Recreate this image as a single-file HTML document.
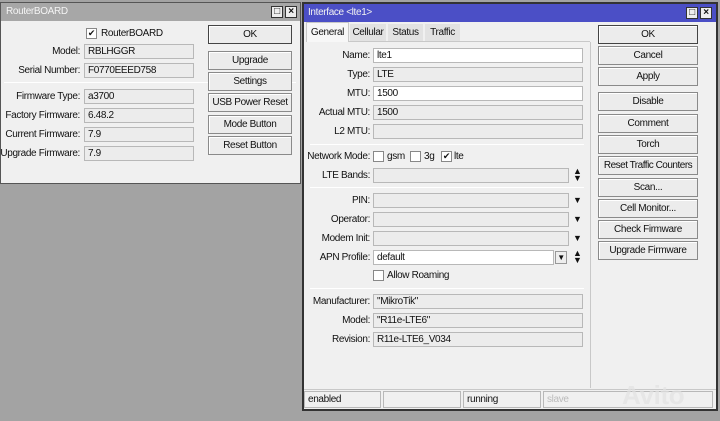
<!DOCTYPE html>
<html><head><style>
*{margin:0;padding:0;box-sizing:border-box}
body{width:720px;height:421px;background:#a3a3a3;font-family:"Liberation Sans",sans-serif;font-size:10px;color:#111;position:relative;overflow:hidden;letter-spacing:-0.35px}
div{white-space:nowrap}
.a{position:absolute}
.win{background:#f0f0f0;border:1px solid #555}
.f{position:absolute;height:15px;border:1px solid #b8b8b8;background:#ececec;padding-left:3px;line-height:13px;font-size:10px}
.w{background:#fff}
.l{position:absolute;text-align:right;line-height:15px}
.b{position:absolute;height:19px;border:1px solid #8a8a8a;background:#ececec;text-align:center;line-height:17px;box-shadow:inset 1px 1px 0 #fff;overflow:hidden}
.sep{position:absolute;height:1px;background:#c8c8c8;border-bottom:1px solid #fff}
.cb{position:absolute;width:11px;height:11px;border:1px solid #888;background:#fff;font-size:9px;line-height:9px;text-align:center}
.ar{position:absolute;font-size:9px}
.tb{position:absolute;top:4px;width:12px;height:12px;border:1px solid #333;background:#eee;font-size:10px;line-height:10px;text-align:center;font-weight:bold}
</style></head><body>
<!-- left window -->
<div class="a win" style="left:0;top:2px;width:301px;height:182px">
<div class="a" style="left:0;top:0;width:299px;height:18px;background:#a7a7a7;color:#f4f4f4;padding-left:5px;line-height:18px">RouterBOARD</div>
<div class="tb" style="left:270px;top:3px">□</div><div class="tb" style="left:284px;top:3px">×</div>
</div>
<div class="cb" style="left:86px;top:28px">✔</div><div class="a" style="left:101px;top:26px;line-height:15px">RouterBOARD</div>
<div class="l" style="left:0;width:80px;top:44px">Model:</div><div class="f" style="left:84px;top:44px;width:110px">RBLHGGR</div>
<div class="l" style="left:0;width:80px;top:63px">Serial Number:</div><div class="f" style="left:84px;top:63px;width:110px">F0770EEED758</div>
<div class="sep" style="left:4px;top:82px;width:292px"></div>
<div class="l" style="left:0;width:80px;top:89px">Firmware Type:</div><div class="f" style="left:84px;top:89px;width:110px">a3700</div>
<div class="l" style="left:0;width:80px;top:108px">Factory Firmware:</div><div class="f" style="left:84px;top:108px;width:110px">6.48.2</div>
<div class="l" style="left:0;width:80px;top:127px">Current Firmware:</div><div class="f" style="left:84px;top:127px;width:110px">7.9</div>
<div class="l" style="left:0;width:80px;top:146px">Upgrade Firmware:</div><div class="f" style="left:84px;top:146px;width:110px">7.9</div>
<div class="b" style="left:208px;top:25px;width:84px;border-color:#444">OK</div>
<div class="b" style="left:208px;top:51px;width:84px">Upgrade</div>
<div class="b" style="left:208px;top:72px;width:84px">Settings</div>
<div class="b" style="left:208px;top:93px;width:84px">USB Power Reset</div>
<div class="b" style="left:208px;top:115px;width:84px">Mode Button</div>
<div class="b" style="left:208px;top:136px;width:84px">Reset Button</div>

<!-- right window -->
<div class="a win" style="left:302px;top:2px;width:416px;height:409px;border:2px solid #333">
<div class="a" style="left:0;top:0;width:412px;height:18px;background:#4b4fc6;color:#f2f2f2;padding-left:4px;line-height:18px">Interface &lt;lte1&gt;</div>
<div class="tb" style="left:382px;top:3px">□</div><div class="tb" style="left:396px;top:3px">×</div>
</div>
<div class="a" style="left:590px;top:42px;width:1px;height:346px;background:#c8c8c8"></div>
<div class="a" style="left:306px;top:41px;width:284px;height:1px;background:#c8c8c8"></div>
<div class="a" style="left:306px;top:22px;width:43px;height:20px;background:#f7f7f7;border:1px solid #c8c8c8;border-bottom:none;line-height:19px;text-align:center">General</div>
<div class="a" style="left:350px;top:24px;width:36px;height:17px;background:#e2e2e2;line-height:17px;text-align:center">Cellular</div>
<div class="a" style="left:388px;top:24px;width:35px;height:17px;background:#e2e2e2;line-height:17px;text-align:center">Status</div>
<div class="a" style="left:425px;top:24px;width:35px;height:17px;background:#e2e2e2;line-height:17px;text-align:center">Traffic</div>

<div class="l" style="left:300px;width:70px;top:48px">Name:</div><div class="f w" style="left:373px;top:48px;width:210px">lte1</div>
<div class="l" style="left:300px;width:70px;top:67px">Type:</div><div class="f" style="left:373px;top:67px;width:210px">LTE</div>
<div class="l" style="left:300px;width:70px;top:86px">MTU:</div><div class="f w" style="left:373px;top:86px;width:210px">1500</div>
<div class="l" style="left:300px;width:70px;top:105px">Actual MTU:</div><div class="f" style="left:373px;top:105px;width:210px">1500</div>
<div class="l" style="left:300px;width:70px;top:124px">L2 MTU:</div><div class="f" style="left:373px;top:124px;width:210px"></div>
<div class="sep" style="left:310px;top:144px;width:274px"></div>
<div class="l" style="left:300px;width:70px;top:149px">Network Mode:</div>
<div class="cb" style="left:373px;top:151px"></div><div class="a" style="left:387px;top:149px;line-height:15px">gsm</div>
<div class="cb" style="left:410px;top:151px"></div><div class="a" style="left:424px;top:149px;line-height:15px">3g</div>
<div class="cb" style="left:441px;top:151px">✔</div><div class="a" style="left:454px;top:149px;line-height:15px">lte</div>
<div class="l" style="left:300px;width:70px;top:168px">LTE Bands:</div><div class="f" style="left:373px;top:168px;width:196px"></div><div class="ar" style="left:573px;top:168px;line-height:7px">▲<br>▼</div>
<div class="sep" style="left:310px;top:187px;width:274px"></div>
<div class="l" style="left:300px;width:70px;top:193px">PIN:</div><div class="f" style="left:373px;top:193px;width:196px"></div><div class="ar" style="left:573px;top:195px">▼</div>
<div class="l" style="left:300px;width:70px;top:212px">Operator:</div><div class="f" style="left:373px;top:212px;width:196px"></div><div class="ar" style="left:573px;top:214px">▼</div>
<div class="l" style="left:300px;width:70px;top:231px">Modem Init:</div><div class="f" style="left:373px;top:231px;width:196px"></div><div class="ar" style="left:573px;top:233px">▼</div>
<div class="l" style="left:300px;width:70px;top:250px">APN Profile:</div><div class="f w" style="left:373px;top:250px;width:181px">default</div>
<div class="a" style="left:555px;top:251px;width:12px;height:13px;border:1px solid #999;background:#eee;font-size:8px;text-align:center;line-height:11px">▼</div><div class="ar" style="left:573px;top:250px;line-height:7px">▲<br>▼</div>
<div class="cb" style="left:373px;top:270px"></div><div class="a" style="left:387px;top:268px;line-height:15px">Allow Roaming</div>
<div class="sep" style="left:310px;top:288px;width:274px"></div>
<div class="l" style="left:300px;width:70px;top:294px">Manufacturer:</div><div class="f" style="left:373px;top:294px;width:210px">"MikroTik"</div>
<div class="l" style="left:300px;width:70px;top:313px">Model:</div><div class="f" style="left:373px;top:313px;width:210px">"R11e-LTE6"</div>
<div class="l" style="left:300px;width:70px;top:332px">Revision:</div><div class="f" style="left:373px;top:332px;width:210px">R11e-LTE6_V034</div>

<div class="a" style="left:304px;top:389px;width:412px;height:1px;background:#c8c8c8"></div>
<div class="f" style="left:304px;top:391px;width:77px;height:17px;line-height:15px;background:#f0f0f0">enabled</div>
<div class="f" style="left:383px;top:391px;width:78px;height:17px;background:#f0f0f0"></div>
<div class="f" style="left:463px;top:391px;width:78px;height:17px;line-height:15px;background:#f0f0f0">running</div>
<div class="f" style="left:543px;top:391px;width:170px;height:17px;line-height:15px;background:#f0f0f0;color:#bbb">slave</div>
<div class="a" style="left:622px;top:380px;font-size:26px;font-weight:bold;color:rgba(225,225,225,0.7)">Avito</div>

<div class="b" style="left:598px;top:25px;width:100px;border-color:#444">OK</div>
<div class="b" style="left:598px;top:46px;width:100px">Cancel</div>
<div class="b" style="left:598px;top:67px;width:100px">Apply</div>
<div class="b" style="left:598px;top:92px;width:100px">Disable</div>
<div class="b" style="left:598px;top:114px;width:100px">Comment</div>
<div class="b" style="left:598px;top:135px;width:100px">Torch</div>
<div class="b" style="left:598px;top:156px;width:100px;letter-spacing:-0.5px">Reset Traffic Counters</div>
<div class="b" style="left:598px;top:178px;width:100px">Scan...</div>
<div class="b" style="left:598px;top:199px;width:100px">Cell Monitor...</div>
<div class="b" style="left:598px;top:220px;width:100px">Check Firmware</div>
<div class="b" style="left:598px;top:241px;width:100px">Upgrade Firmware</div>
</body></html>
